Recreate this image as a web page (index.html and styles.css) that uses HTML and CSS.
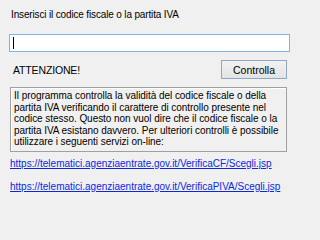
FILE: index.html
```html
<!DOCTYPE html>
<html>
<head>
<meta charset="utf-8">
<link rel="stylesheet" href="styles.css">
</head>
<body>
<div class="form">
  <div class="title">Inserisci il codice fiscale o la partita IVA</div>
  <div class="input"><span class="caret"></span></div>
  <div class="row">
    <span class="warn">ATTENZIONE!</span>
    <span class="btn">Controlla</span>
  </div>
  <div class="info">Il programma controlla la validità del codice fiscale o della partita IVA verificando il carattere di controllo presente nel codice stesso. Questo non vuol dire che il codice fiscale o la partita IVA esistano davvero. Per ulteriori controlli è possibile utilizzare i seguenti servizi on-line:</div>
  <a class="link" href="#">https://telematici.agenziaentrate.gov.it/VerificaCF/Scegli.jsp</a>
  <a class="link" href="#">https://telematici.agenziaentrate.gov.it/VerificaPIVA/Scegli.jsp</a>
</div>
</body>
</html>
```
FILE: styles.css
```css
html, body {
  margin: 0;
  padding: 0;
  background: #f0f0f0;
}
body {
  width: 300px;
  height: 216px;
  overflow: hidden;
  font-family: "Liberation Sans", Arial, sans-serif;
  font-size: 10px;
  color: #000;
}
.form {
  display: flex;
  flex-direction: column;
  padding: 0 10px 0 10px;
}
.title {
  margin-top: 9px;
  line-height: 12px;
  padding-left: 1px;
  letter-spacing: -0.15px;
}
.input {
  margin-top: 13px;
  margin-left: -1px;
  height: 16px;
  background: #fff;
  border: 1px solid #7eb4ea;
  display: flex;
  align-items: center;
  padding-left: 3px;
}
.caret {
  width: 1px;
  height: 12px;
  background: #000;
}
.row {
  margin-top: 8px;
  display: flex;
  align-items: center;
  justify-content: space-between;
  padding-right: 3px;
}
.warn {
  padding-left: 3px;
  font-size: 10.5px;
  letter-spacing: -0.15px;
}
.btn {
  width: 64px;
  height: 17px;
  border: 1px solid #8fa8c8;
  background: linear-gradient(#f2f2f2, #e3e3e3);
  display: flex;
  align-items: center;
  justify-content: center;
  font-size: 10.5px;
}
.info {
  margin-top: 8px;
  margin-right: 3px;
  border: 1px solid #a0a0a0;
  box-shadow: inset 1px 1px 0 #fff;
  background: #f0f0f0;
  padding: 2px 3px 3px 3px;
  line-height: 11.5px;
  letter-spacing: -0.05px;
}
.link {
  color: #0b28e0;
  text-decoration: underline;
  line-height: 12px;
  margin-top: 6px;
}
.link + .link {
  margin-top: 11px;
}
```
